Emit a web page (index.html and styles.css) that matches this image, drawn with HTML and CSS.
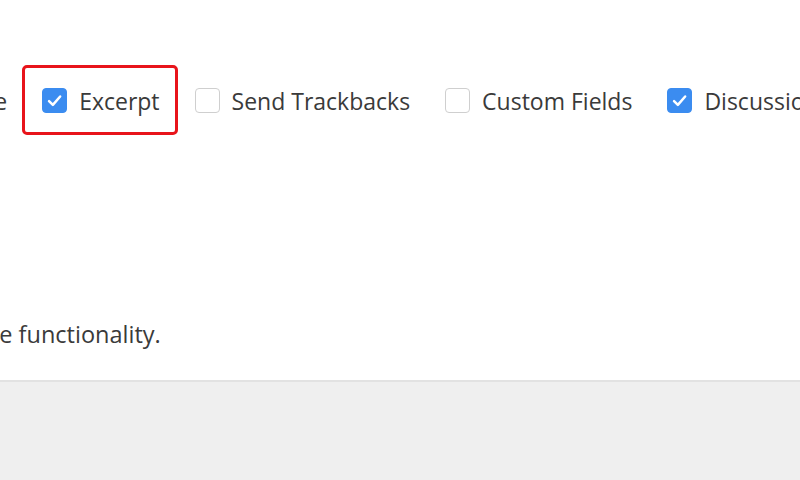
FILE: index.html
```html
<!DOCTYPE html>
<html>
<head>
<meta charset="utf-8">
<link rel="stylesheet" href="styles.css">
</head>
<body>
<div class="panel">
  <div class="options">
    <label class="opt"><span class="box"></span><span class="txt">Featured Image</span></label>
    <label class="opt highlight"><span class="box checked"><svg viewBox="0 0 24 24" width="24" height="24"><path d="M6.3 12.6l4 4 7.6-8.8" fill="none" stroke="#fff" stroke-width="2.6" stroke-linecap="round" stroke-linejoin="round"/></svg></span><span class="txt">Excerpt</span></label>
    <label class="opt"><span class="box"></span><span class="txt">Send Trackbacks</span></label>
    <label class="opt"><span class="box"></span><span class="txt">Custom Fields</span></label>
    <label class="opt"><span class="box checked"><svg viewBox="0 0 24 24" width="24" height="24"><path d="M6.3 12.6l4 4 7.6-8.8" fill="none" stroke="#fff" stroke-width="2.6" stroke-linecap="round" stroke-linejoin="round"/></svg></span><span class="txt">Discussion</span></label>
  </div>
  <p class="note">Some meta boxes may be hidden to simplify the editing screen and its core functionality.</p>
</div>
<div class="footer"></div>
</body>
</html>
```
FILE: styles.css
```css
html, body {
  margin: 0;
  padding: 0;
  background: #ffffff;
  overflow: hidden;
  width: 800px;
  height: 480px;
}
body {
  font-family: "Open Sans", "Liberation Sans", sans-serif;
  color: #3a3a3a;
}
.panel {
  height: 380px;
  overflow: hidden;
  background: #fff;
}
.options {
  display: flex;
  align-items: center;
  gap: 35px;
  margin-left: -198px;
  padding-top: 88px;
  white-space: nowrap;
}
.opt {
  position: relative;
  display: flex;
  align-items: center;
  gap: 12px;
  font-size: 23px;
  line-height: 25px;
  flex: none;
}
.txt {
  position: relative;
  top: 1px;
}
.box {
  width: 23px;
  height: 23px;
  border: 1px solid #cfcfcf;
  border-radius: 4px;
  background: #fff;
  box-sizing: content-box;
  display: block;
  flex: none;
}
.box.checked {
  background: #3b8cf0;
  border-color: #3b8cf0;
}
.box svg {
  display: block;
  width: 23px;
  height: 23px;
}
.highlight::after {
  content: "";
  position: absolute;
  left: -20px;
  right: -18px;
  top: -23px;
  bottom: -22px;
  border: 3px solid #e8141b;
  border-radius: 5px;
}
.note {
  margin: 0;
  margin-top: 206px;
  font-size: 23.5px;
  line-height: 30px;
  white-space: nowrap;
  margin-left: -808px;
}
.footer {
  height: 100px;
  background: #efefef;
  border-top: 2px solid #e2e2e2;
}
```
